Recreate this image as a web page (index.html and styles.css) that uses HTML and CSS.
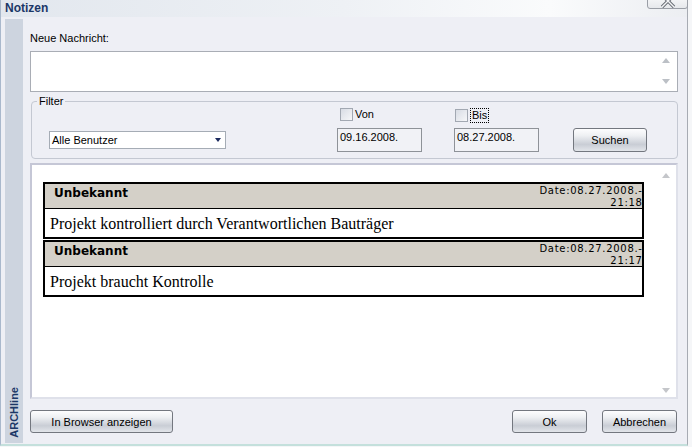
FILE: index.html
```html
<!DOCTYPE html>
<html lang="de">

<head>
    <meta charset="UTF-8">
    <title>Notizen</title>
    <link rel="stylesheet" href="styles.css">
</head>

<body>
    <div class="window">
        <div class="titlebar">
            <span class="title">Notizen</span>
            <button class="close">
                <svg width="16" height="14" viewBox="0 0 16 14">
                    <path d="M2 1 L14 13 M14 1 L2 13" stroke="#6a6e76" stroke-width="3.4" fill="none" />
                    <path d="M2 1 L14 13 M14 1 L2 13" stroke="#f4f5f7" stroke-width="1.4" fill="none" />
                </svg>
            </button>
        </div>

        <div class="content">
            <div class="sidebar"><span class="brand">ARCHline</span></div>

            <div class="main">
                <div class="label">Neue Nachricht:</div>
                <div class="textbox">
                    <div class="textbox-input"></div>
                    <div class="arrows textbox-arrows">
                        <span class="arrow up"></span>
                        <span class="arrow down"></span>
                    </div>
                </div>

                <fieldset class="filter">
                    <legend>Filter</legend>
                    <div class="filter-grid">
                        <div></div>
                        <label class="check check-von"><span class="box"></span>Von</label>
                        <label class="check check-bis"><span class="box"></span><span class="focus">Bis</span></label>
                        <div></div>

                        <div class="select">
                            <span>Alle Benutzer</span>
                            <span class="select-arrow"></span>
                        </div>
                        <div class="date">09.16.2008.</div>
                        <div class="date">08.27.2008.</div>
                        <button class="btn btn-search">Suchen</button>
                    </div>
                </fieldset>

                <div class="pane">
                    <div class="notes">
                        <div class="note">
                            <div class="note-head">
                                <span class="note-author">Unbekannt</span>
                                <span class="note-date">
                                    <span class="date-line">Date:08.27.2008.-</span>
                                    <span class="date-line">21:18</span>
                                </span>
                            </div>
                            <div class="note-body">Projekt kontrolliert durch Verantwortlichen Bauträger</div>
                        </div>
                        <div class="note">
                            <div class="note-head">
                                <span class="note-author">Unbekannt</span>
                                <span class="note-date">
                                    <span class="date-line">Date:08.27.2008.-</span>
                                    <span class="date-line">21:17</span>
                                </span>
                            </div>
                            <div class="note-body">Projekt braucht Kontrolle</div>
                        </div>
                    </div>
                    <div class="arrows pane-arrows">
                        <span class="arrow up"></span>
                        <span class="arrow down"></span>
                    </div>
                </div>

                <div class="actions">
                    <button class="btn btn-browser">In Browser anzeigen</button>
                    <div class="actions-right">
                        <button class="btn btn-dialog">Ok</button>
                        <button class="btn btn-dialog">Abbrechen</button>
                    </div>
                </div>
            </div>
        </div>
    </div>
</body>

</html>
```

FILE: styles.css
```css
html {
    background: #f5f6f8;
}

body {
    margin: 0;
    font-family: "Liberation Sans", Arial, sans-serif;
    font-size: 11px;
    color: #000;
}

.window {
    width: 688px;
    height: 446px;
    box-sizing: border-box;
    display: flex;
    flex-direction: column;
    background: #eeeff5;
    border-left: 1px solid #a9b8cc;
    border-right: 1px solid #a7abb3;
    border-bottom: 2px solid #c4e0dc;
}

.titlebar {
    height: 17px;
    display: flex;
    justify-content: space-between;
    align-items: flex-start;
    padding-left: 4px;
    background: linear-gradient(to right, #e2e7ee, #eef1f5 50%, #fafbfc 80%, #eceef2);
}

.title {
    font-size: 12px;
    font-weight: bold;
    line-height: 16px;
    color: #1b3767;
}

.close {
    width: 41px;
    height: 18px;
    margin-top: -9px;
    margin-right: -1px;
    padding: 0;
    border: 1px solid #9a9ea6;
    border-radius: 3px;
    background: linear-gradient(#ffffff, #e6e8ec);
    display: flex;
    justify-content: center;
    align-items: center;
}

.close svg {
    margin-top: 1px;
}

.content {
    flex: 1;
    display: flex;
    gap: 7px;
    padding: 2px 9px 1px 4px;
}

.sidebar {
    width: 18px;
    background: #cdd4df;
    display: flex;
    flex-direction: column;
    justify-content: flex-end;
    align-items: center;
    padding-bottom: 5px;
    box-sizing: border-box;
}

.brand {
    writing-mode: vertical-rl;
    transform: rotate(180deg);
    font-size: 11px;
    font-weight: bold;
    color: #1b3767;
    line-height: 12px;
}

.main {
    width: 648px;
    display: flex;
    flex-direction: column;
    padding-top: 13px;
}

.label {
    line-height: 13px;
}

.textbox {
    margin-top: 6px;
    height: 41px;
    box-sizing: border-box;
    border: 1px solid #a9adb5;
    background: #fff;
    display: flex;
}

.textbox-input {
    flex: 1;
}

.arrows {
    width: 9px;
    display: flex;
    flex-direction: column;
    justify-content: space-between;
}

.textbox-arrows {
    margin-right: 6px;
    padding: 6px 0 7px;
}

.arrow {
    width: 0;
    height: 0;
    border-left: 4.5px solid transparent;
    border-right: 4.5px solid transparent;
}

.arrow.up {
    border-bottom: 5px solid #bcc0c6;
}

.arrow.down {
    border-top: 5px solid #bcc0c6;
}

.filter {
    margin: 3px 0 0 1px;
    padding: 0;
    border: 1px solid #c4c8d2;
    border-radius: 4px;
    min-inline-size: 0;
}

.filter legend {
    margin-left: 5px;
    padding: 0 2px;
    line-height: 13px;
}

.filter-grid {
    display: grid;
    grid-template-columns: 288px 117px 119px 74px;
    grid-template-rows: 13px 24px;
    row-gap: 7px;
    padding: 0 0 6px 17px;
}

.check {
    display: flex;
    align-items: center;
    line-height: 13px;
}

.box {
    width: 11px;
    height: 11px;
    border: 1px solid #a2a8b2;
    background: linear-gradient(135deg, #d8dce4, #f6f7f9);
    margin-right: 2px;
}

.check-von {
    margin-left: 3px;
}

.check-bis {
    margin-left: 1px;
    margin-top: 1px;
}

.focus {
    outline: 1px dotted #000;
    padding: 0 1px;
    margin-left: 1px;
    line-height: 13px;
}

.select {
    align-self: center;
    width: 177px;
    height: 18px;
    box-sizing: border-box;
    border: 1px solid #a5acb5;
    background: #fff;
    display: flex;
    justify-content: space-between;
    align-items: center;
    padding-left: 2px;
    line-height: 16px;
}

.select-arrow {
    width: 15px;
    display: flex;
    justify-content: center;
}

.select-arrow::before {
    content: "";
    border-left: 3.5px solid transparent;
    border-right: 3.5px solid transparent;
    border-top: 4px solid #1b2a5e;
}

.date {
    width: 85px;
    box-sizing: border-box;
    border: 1px solid #8e9298;
    background: #f1f2f6;
    padding: 2px 2px;
    line-height: 13px;
}

.btn {
    font-family: "Liberation Sans", Arial, sans-serif;
    font-size: 11px;
    color: #000;
    border: 1px solid #73777f;
    border-radius: 3px;
    background: linear-gradient(#fdfdfe 0%, #eef0f3 30%, #c9cdd5 70%, #e2e5ea 100%);
    padding: 0;
}

.btn-search {
    width: 74px;
    height: 24px;
}

.pane {
    margin-top: 4px;
    height: 236px;
    box-sizing: border-box;
    border: 2px solid;
    border-color: #c5c7d6 #dfe1ea #dfe1ea #c5c7d6;
    background: #fff;
    display: flex;
}

.notes {
    flex: 1;
    padding: 17px 0 0 11px;
}

.note {
    width: 601px;
    box-sizing: border-box;
    border: 2px solid #000;
    margin-bottom: 1px;
}

.note-head {
    height: 25px;
    box-sizing: border-box;
    background: #d4d0c8;
    border-bottom: 1px solid #000;
    display: flex;
    justify-content: space-between;
    align-items: flex-start;
}

.note-author {
    font-family: "DejaVu Sans", Verdana, sans-serif;
    font-weight: bold;
    font-size: 12px;
    line-height: 14px;
    padding: 2px 0 0 9px;
}

.note-date {
    display: flex;
    flex-direction: column;
    align-items: flex-end;
    font-family: "DejaVu Sans", Verdana, sans-serif;
    font-size: 10px;
    letter-spacing: 0.7px;
    line-height: 11.7px;
    padding-top: 1px;
}

.date-line {
    margin-right: -0.7px;
}

.note-body {
    height: 28px;
    box-sizing: border-box;
    padding: 2px 0 0 5px;
    font-family: "Liberation Serif", "Times New Roman", serif;
    font-size: 16px;
    line-height: 26px;
}

.pane-arrows {
    margin-right: 5px;
    padding: 8px 0 4px;
}

.pane-arrows .arrow.up {
    border-bottom-color: #c4c6ca;
}

.pane-arrows .arrow.down {
    border-top-color: #c4c6ca;
}

.actions {
    margin-top: 11px;
    display: flex;
    justify-content: space-between;
    padding-right: 1px;
}

.actions .btn {
    height: 23px;
}

.btn-browser {
    width: 143px;
}

.actions-right {
    display: flex;
    gap: 15px;
}

.btn-dialog {
    width: 75px;
}
```
